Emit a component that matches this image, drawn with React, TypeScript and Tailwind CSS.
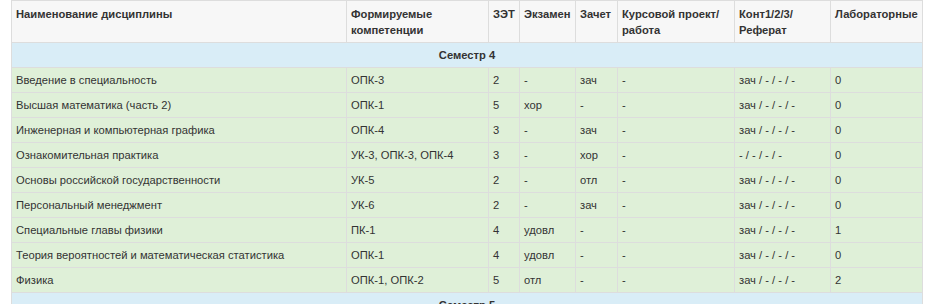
import React from "react";

const widths = ["w-[335px]", "w-[142px]", "w-[31px]", "w-[56px]", "w-[42px]", "w-[117px]", "w-[96px]", "w-[92px]"];

const headers = [
  "Наименование дисциплины",
  "Формируемые компетенции",
  "ЗЭТ",
  "Экзамен",
  "Зачет",
  "Курсовой проект/ работа",
  "Конт1/2/3/ Реферат",
  "Лабораторные",
];

const rows: string[][] = [
  ["Введение в специальность", "ОПК-3", "2", "-", "зач", "-", "зач / - / - / -", "0"],
  ["Высшая математика (часть 2)", "ОПК-1", "5", "хор", "-", "-", "зач / - / - / -", "0"],
  ["Инженерная и компьютерная графика", "ОПК-4", "3", "-", "зач", "-", "зач / - / - / -", "0"],
  ["Ознакомительная практика", "УК-3, ОПК-3, ОПК-4", "3", "-", "хор", "-", "- / - / - / -", "0"],
  ["Основы российской государственности", "УК-5", "2", "-", "отл", "-", "зач / - / - / -", "0"],
  ["Персональный менеджмент", "УК-6", "2", "-", "зач", "-", "зач / - / - / -", "0"],
  ["Специальные главы физики", "ПК-1", "4", "удовл", "-", "-", "зач / - / - / -", "1"],
  ["Теория вероятностей и математическая статистика", "ОПК-1", "4", "удовл", "-", "-", "зач / - / - / -", "0"],
  ["Физика", "ОПК-1, ОПК-2", "5", "отл", "-", "-", "зач / - / - / -", "2"],
];

function Semester({ label }: { label: string }) {
  return (
    <tr className="h-[25px] bg-[#d9edf7]">
      <td colSpan={8} className="border-r border-b border-[#dddddd] px-[5px] py-0 text-center align-middle font-bold">
        {label}
      </td>
    </tr>
  );
}

export default function App() {
  return (
    <div
      className="w-[936px] h-[304px] overflow-hidden bg-white pl-[11px] text-[11.2px] leading-[16px] text-[#333333]"
      style={{ fontFamily: '"Liberation Sans", Arial, Helvetica, sans-serif' }}
    >
      <table className="w-[912px] table-fixed border-separate border-spacing-0 border-l border-t border-[#dddddd]">
        <thead>
          <tr className="h-[42px] bg-[#f7f7f7]">
            {headers.map((h, i) => (
              <th
                key={i}
                className={`${widths[i]} border-r border-b border-[#dddddd] pl-[4px] pr-[4px] pt-[5px] pb-0 text-left align-top font-bold`}
              >
                {h}
              </th>
            ))}
          </tr>
        </thead>
        <tbody>
          <Semester label="Семестр 4" />
          {rows.map((r, ri) => (
            <tr key={ri} className="h-[25px] bg-[#dff0d8]">
              {r.map((c, ci) => (
                <td key={ci} className="border-r border-b border-[#dddddd] pl-[4px] pr-[4px] py-0 align-middle whitespace-nowrap">
                  {c}
                </td>
              ))}
            </tr>
          ))}
          <Semester label="Семестр 5" />
        </tbody>
      </table>
    </div>
  );
}
